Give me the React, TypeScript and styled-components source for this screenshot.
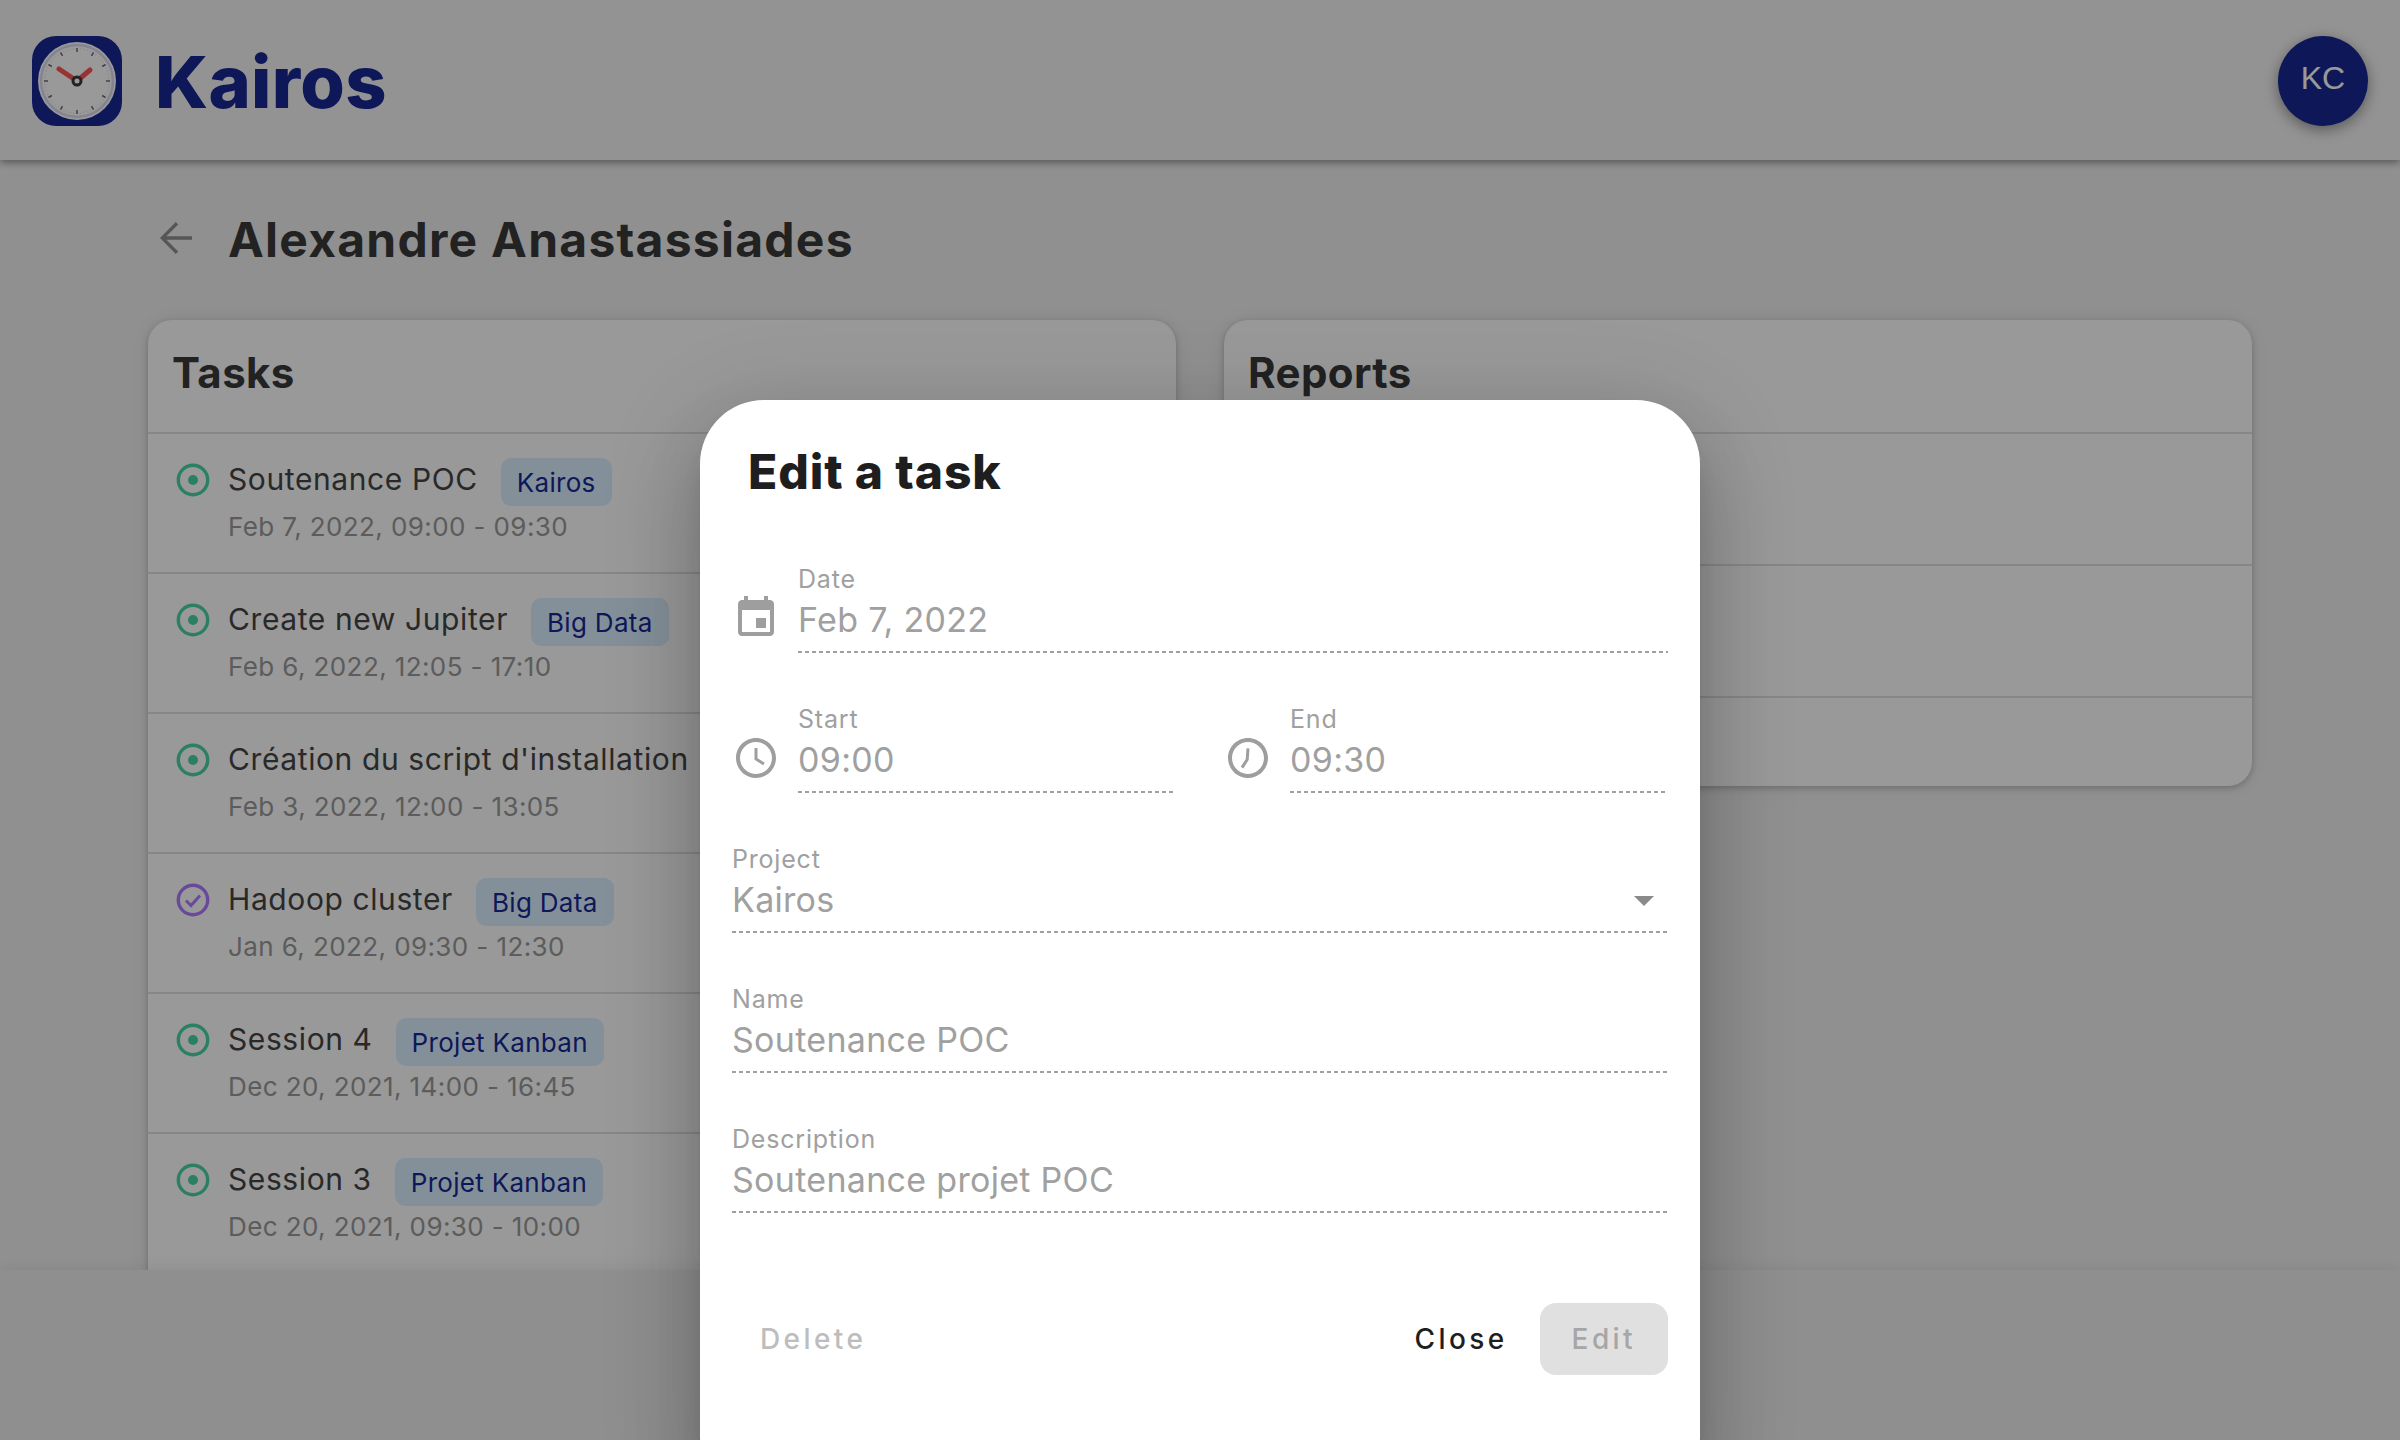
import React from "react";
import styled, { createGlobalStyle } from "styled-components";

const FONT = `Inter, "Noto Sans", sans-serif`;

const Global = createGlobalStyle`
  html, body { margin: 0; padding: 0; background: #f1f1f1; }
  * { box-sizing: border-box; }
  body { font-family: ${FONT}; width: 2400px; height: 1440px; overflow: hidden; }
`;

const Page = styled.div`
  position: relative;
  width: 2400px;
  height: 1440px;
  display: flex;
  flex-direction: column;
  overflow: hidden;
  background: #f1f1f1;
`;

const Header = styled.header`
  position: relative;
  z-index: 2;
  flex: 0 0 160px;
  display: flex;
  align-items: center;
  justify-content: space-between;
  padding: 2px 32px 0;
  background: #f5f5f5;
  box-shadow: 0 2px 8px rgba(0, 0, 0, 0.45);
`;

const Brand = styled.div`
  display: flex;
  align-items: center;
  gap: 33px;
`;

const BrandName = styled.span`
  font-size: 72px;
  font-weight: 800;
  line-height: 90px;
  color: #182895;
  letter-spacing: 0.3px;
  padding-top: 2px;
`;

const Avatar = styled.div`
  width: 90px;
  height: 90px;
  border-radius: 50%;
  background: #182895;
  color: #fff;
  display: flex;
  align-items: center;
  justify-content: center;
  padding-bottom: 6px;
  font-family: "Liberation Sans", Arial, sans-serif;
  font-size: 32px;
  box-shadow: 0 4px 14px rgba(0, 0, 0, 0.4);
`;

const Main = styled.main`
  flex: 1;
  min-height: 0;
  overflow: hidden;
  padding: 0 148px;
`;

const TitleRow = styled.div`
  height: 160px;
  display: flex;
  align-items: center;
  gap: 28px;
  padding-left: 4px;
`;

const BackIcon = styled.svg`
  width: 48px;
  height: 48px;
  margin-top: -4px;
  fill: #8f8f8f;
`;

const PageTitle = styled.h1`
  margin: 0;
  font-size: 48px;
  line-height: 60px;
  font-weight: 700;
  letter-spacing: 1.25px;
  color: #3a3a3a;
`;

const Columns = styled.div`
  display: grid;
  grid-template-columns: 1028px 1028px;
  gap: 48px;
  align-items: start;
`;

const Card = styled.section<{ $bleed?: boolean }>`
  background: #fff;
  border-radius: 24px;
  box-shadow: 0 2px 6px rgba(0, 0, 0, 0.22), 0 0 24px rgba(0, 0, 0, 0.07);
  overflow: hidden;
  padding-bottom: ${(p) => (p.$bleed ? "60px" : "0")};
`;

const CardTitle = styled.h2`
  margin: 0;
  height: 112px;
  padding: 29px 24px 0;
  font-size: 42px;
  line-height: 48px;
  font-weight: 700;
  letter-spacing: 0.4px;
  color: #3a3a3a;
`;

const TaskRow = styled.div`
  height: 140px;
  display: flex;
  gap: 18px;
  padding: 26px 24px 0 28px;
  border-top: 2px solid #e2e2e2;
`;

const StatusSvg = styled.svg`
  flex: 0 0 34px;
  width: 34px;
  height: 34px;
  margin-top: 3px;
`;

const TaskBody = styled.div`
  display: flex;
  flex-direction: column;
`;

const TaskHead = styled.div`
  display: flex;
  align-items: flex-start;
  gap: 23px;
  height: 50px;
`;

const TaskName = styled.span`
  font-size: 30px;
  line-height: 38px;
  letter-spacing: 0.6px;
  color: #454545;
  white-space: nowrap;
`;

const Chip = styled.span`
  height: 48px;
  margin-top: -2px;
  padding: 0 16px;
  display: inline-flex;
  align-items: center;
  border-radius: 10px;
  background: #dcf0ff;
  color: #182895;
  font-size: 26px;
  letter-spacing: 0.3px;
  white-space: nowrap;
`;

const TaskDate = styled.span`
  font-size: 26px;
  line-height: 34px;
  letter-spacing: 0.4px;
  color: #999;
  white-space: nowrap;
`;

const ReportRow = styled.div<{ $h: number }>`
  height: ${(p) => p.$h}px;
  border-top: 2px solid #e2e2e2;
`;

const Footer = styled.footer`
  position: relative;
  z-index: 1;
  flex: 0 0 170px;
  background: #eeeeee;
  box-shadow: 0 -4px 14px rgba(0, 0, 0, 0.06);
`;

const Overlay = styled.div`
  position: absolute;
  inset: 0;
  z-index: 5;
  background: rgba(0, 0, 0, 0.4);
`;

const Modal = styled.div`
  position: absolute;
  z-index: 6;
  left: 700px;
  top: 400px;
  width: 1000px;
  height: 1100px;
  background: #fff;
  border-radius: 64px;
  padding: 42px 32px 0;
  box-shadow: 0 22px 30px -14px rgba(0, 0, 0, 0.2), 0 48px 76px 6px rgba(0, 0, 0, 0.14), 0 18px 92px 16px rgba(0, 0, 0, 0.12);
`;

const ModalTitle = styled.h2`
  margin: 0 0 62px;
  padding-left: 16px;
  font-size: 48px;
  line-height: 60px;
  font-weight: 800;
  letter-spacing: 0.9px;
  color: #1e1e1e;
`;

const Form = styled.div`
  display: flex;
  flex-direction: column;
  gap: 51px;
`;

const Split = styled.div`
  display: grid;
  grid-template-columns: 1fr 1fr;
  gap: 48px;
`;

const IconField = styled.div`
  display: flex;
  align-items: flex-end;
  gap: 18px;
`;

const IconSlot = styled.svg`
  flex: 0 0 48px;
  width: 48px;
  height: 48px;
  margin-bottom: 11px;
  fill: #9e9e9e;
`;

const Field = styled.div`
  position: relative;
  flex: 1 0 auto;
  height: 89px;
  background-image: linear-gradient(to right, #a0a0a0 4px, transparent 4px);
  background-size: 7px 2px;
  background-repeat: repeat-x;
  background-position: left bottom;
  display: flex;
  flex-direction: column;
`;

const Label = styled.label`
  font-size: 25px;
  line-height: 30px;
  letter-spacing: 0.8px;
  color: #a0a0a0;
`;

const Value = styled.span`
  margin-top: 4px;
  font-size: 34px;
  line-height: 44px;
  letter-spacing: 0.3px;
  color: #a0a0a0;
`;

const DropArrow = styled.svg`
  position: absolute;
  right: 0;
  bottom: 9px;
  width: 48px;
  height: 48px;
  fill: #8a8a8a;
`;

const Actions = styled.div`
  margin-top: 90px;
  display: flex;
  align-items: center;
`;

const Btn = styled.button<{ $tone: "muted" | "dark" | "filled" }>`
  height: 72px;
  border: 0;
  border-radius: 16px;
  padding: 0 ${(p) => (p.$tone === "muted" ? "28px" : "32px")};
  font-family: ${FONT};
  font-size: 28px;
  font-weight: 500;
  letter-spacing: 3.4px;
  background: ${(p) => (p.$tone === "filled" ? "#e0e0e0" : "transparent")};
  color: ${(p) => (p.$tone === "dark" ? "#1e1e1e" : p.$tone === "filled" ? "#a6a6a6" : "#bdbdbd")};
`;

const Spacer = styled.div`
  flex: 1;
`;

const Logo = () => {
  const ticks = [];
  for (let i = 0; i < 60; i++) {
    const a = (i * Math.PI) / 30;
    const big = i % 5 === 0;
    const r1 = big ? 29 : 31.5;
    const r2 = 33;
    ticks.push(
      <line
        key={i}
        x1={45 + r1 * Math.sin(a)}
        y1={45 - r1 * Math.cos(a)}
        x2={45 + r2 * Math.sin(a)}
        y2={45 - r2 * Math.cos(a)}
        stroke={big ? "#6a6a78" : "#d8d8e0"}
        strokeWidth={big ? 1.5 : 0.8}
      />
    );
  }
  return (
    <svg width="90" height="90" viewBox="0 0 90 90">
      <rect width="90" height="90" rx="24" fill="#182895" />
      <circle cx="45" cy="45" r="39" fill="#fff" />
      <circle cx="45" cy="45" r="36" fill="none" stroke="#dcdcf0" strokeWidth="2.5" />
      {ticks}
      <path d="M45 45 L27 33" stroke="#ff5555" strokeWidth="5" strokeLinecap="round" />
      <path d="M45 45 L58 34" stroke="#ff5555" strokeWidth="5" strokeLinecap="round" />
      <circle cx="45" cy="45" r="4" fill="#fff" stroke="#3a3a3a" strokeWidth="3" />
    </svg>
  );
};

const Status = ({ done }: { done?: boolean }) => (
  <StatusSvg viewBox="0 0 34 34" fill="none">
    <circle cx="17" cy="17" r="14.7" stroke={done ? "#b07aff" : "#48d4a5"} strokeWidth="3.4" />
    {done ? (
      <path d="M10 17.5l5 5 9-10" stroke="#b07aff" strokeWidth="3" />
    ) : (
      <circle cx="17" cy="17" r="5" fill="#48d4a5" />
    )}
  </StatusSvg>
);

const tasks = [
  { name: "Soutenance POC", chip: "Kairos", date: "Feb 7, 2022, 09:00 - 09:30" },
  { name: "Create new Jupiter", chip: "Big Data", date: "Feb 6, 2022, 12:05 - 17:10" },
  { name: "Création du script d'installation", chip: "Big Data", date: "Feb 3, 2022, 12:00 - 13:05" },
  { name: "Hadoop cluster", chip: "Big Data", date: "Jan 6, 2022, 09:30 - 12:30", done: true },
  { name: "Session 4", chip: "Projet Kanban", date: "Dec 20, 2021, 14:00 - 16:45" },
  { name: "Session 3", chip: "Projet Kanban", date: "Dec 20, 2021, 09:30 - 10:00" },
];

const Clock = ({ hands }: { hands: string }) => (
  <IconSlot viewBox="0 0 24 24">
    <path d="M11.99 2C6.47 2 2 6.48 2 12s4.47 10 9.99 10C17.52 22 22 17.52 22 12S17.52 2 11.99 2zM12 20c-4.42 0-8-3.58-8-8s3.58-8 8-8 8 3.58 8 8-3.58 8-8 8z" />
    <path d={hands} fill="none" stroke="#9e9e9e" strokeWidth="1.5" />
  </IconSlot>
);

export default function App() {
  return (
    <Page>
      <Global />
      <Header>
        <Brand>
          <Logo />
          <BrandName>Kairos</BrandName>
        </Brand>
        <Avatar>KC</Avatar>
      </Header>
      <Main>
        <TitleRow>
          <BackIcon viewBox="0 0 24 24">
            <path d="M20 11.1H7.2l5.9-5.9L11.9 4 4 12l7.9 8 1.2-1.2-5.9-5.9H20z" />
          </BackIcon>
          <PageTitle>Alexandre Anastassiades</PageTitle>
        </TitleRow>
        <Columns>
          <Card $bleed>
            <CardTitle>Tasks</CardTitle>
            {tasks.map((t) => (
              <TaskRow key={t.name}>
                <Status done={t.done} />
                <TaskBody>
                  <TaskHead>
                    <TaskName>{t.name}</TaskName>
                    <Chip>{t.chip}</Chip>
                  </TaskHead>
                  <TaskDate>{t.date}</TaskDate>
                </TaskBody>
              </TaskRow>
            ))}
          </Card>
          <Card>
            <CardTitle>Reports</CardTitle>
            <ReportRow $h={132} />
            <ReportRow $h={132} />
            <ReportRow $h={90} />
          </Card>
        </Columns>
      </Main>
      <Footer />
      <Overlay />
      <Modal>
        <ModalTitle>Edit a task</ModalTitle>
        <Form>
          <IconField>
            <IconSlot viewBox="0 0 24 24">
              <path d="M17 12h-5v5h5v-5zM16 1v2H8V1H6v2H5c-1.11 0-1.99.9-1.99 2L3 19c0 1.1.89 2 2 2h14c1.1 0 2-.9 2-2V5c0-1.1-.9-2-2-2h-1V1h-2zm3 18H5V8h14v11z" />
            </IconSlot>
            <Field>
              <Label>Date</Label>
              <Value>Feb 7, 2022</Value>
            </Field>
          </IconField>
          <Split>
            <IconField>
              <Clock hands="M12 7V12.5L16 15" />
              <Field>
                <Label>Start</Label>
                <Value>09:00</Value>
              </Field>
            </IconField>
            <IconField>
              <Clock hands="M12 7.2L11.6 12.8L9 16.8" />
              <Field>
                <Label>End</Label>
                <Value>09:30</Value>
              </Field>
            </IconField>
          </Split>
          <Field>
            <Label>Project</Label>
            <Value>Kairos</Value>
            <DropArrow viewBox="0 0 24 24">
              <path d="M7 10l5 5 5-5z" />
            </DropArrow>
          </Field>
          <Field>
            <Label>Name</Label>
            <Value>Soutenance POC</Value>
          </Field>
          <Field>
            <Label>Description</Label>
            <Value>Soutenance projet POC</Value>
          </Field>
        </Form>
        <Actions>
          <Btn $tone="muted">Delete</Btn>
          <Spacer />
          <Btn $tone="dark">Close</Btn>
          <Btn $tone="filled">Edit</Btn>
        </Actions>
      </Modal>
    </Page>
  );
}
